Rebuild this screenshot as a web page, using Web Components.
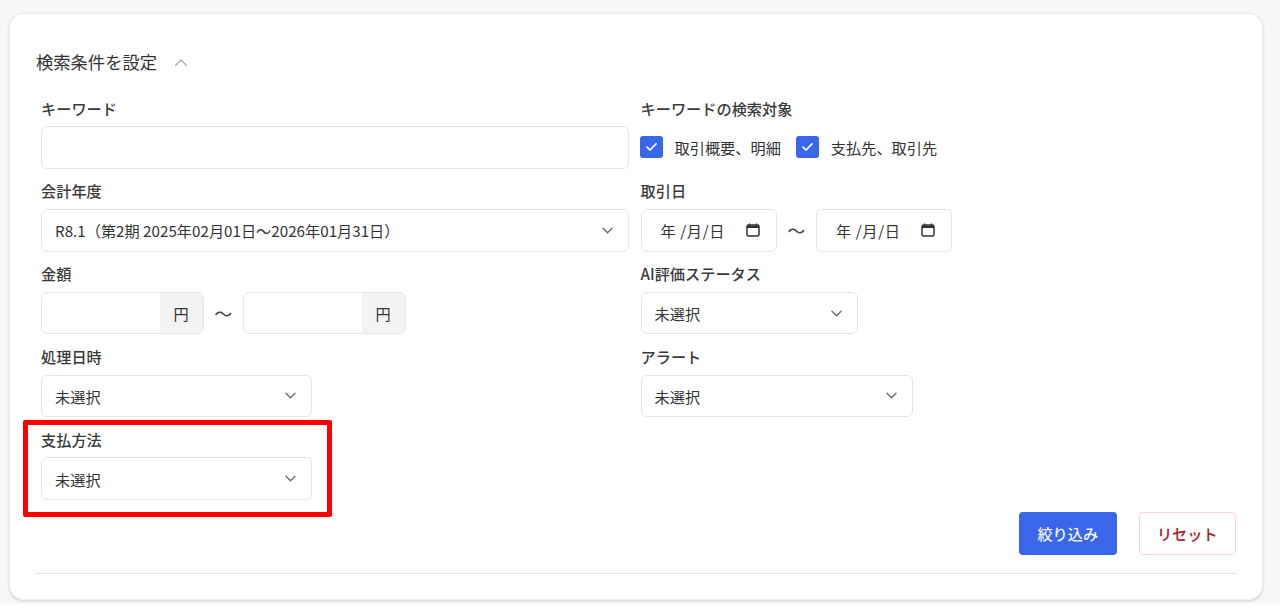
<!DOCTYPE html>
<html lang="ja">
<head>
<meta charset="utf-8">
<title>検索条件を設定</title>
<style>
html,body{margin:0;padding:0;background:#fff;}
body{font-family:"Noto Sans CJK JP","Noto Sans",sans-serif;color:#333;font-size:15.200px;}
</style>
</head>
<body>
<search-page>
  <search-field label="キーワード"><text-box></text-box></search-field>
  <search-field label="キーワードの検索対象">
    <check-row>
      <check-box>取引概要、明細</check-box>
      <check-box>支払先、取引先</check-box>
    </check-row>
  </search-field>
  <search-field label="会計年度"><select-box>R8.1（第2期 2025年02月01日～2026年01月31日）</select-box></search-field>
  <search-field label="取引日">
    <range-row><date-box></date-box><date-box></date-box></range-row>
  </search-field>
  <search-field label="金額">
    <range-row><money-box></money-box><money-box></money-box></range-row>
  </search-field>
  <search-field label="AI評価ステータス"><select-box style="width:217.500px">未選択</select-box></search-field>
  <search-field label="処理日時"><select-box style="width:271px">未選択</select-box></search-field>
  <search-field label="アラート"><select-box style="width:272px">未選択</select-box></search-field>
  <search-field label="支払方法" highlighted><select-box style="width:271px">未選択</select-box></search-field>
  <action-button slot="actions" kind="primary">絞り込み</action-button>
  <action-button slot="actions" kind="danger">リセット</action-button>
</search-page>
<script>
function define(name, css, html, setup){
  customElements.define(name, class extends HTMLElement{
    constructor(){
      super();
      const r=this.attachShadow({mode:'open'});
      r.innerHTML='<style>'+css+'</style>'+html;
    }
    connectedCallback(){ if(setup) setup(this); }
  });
}
const CHEVRON='<svg width="11" height="7" viewBox="0 0 11 7" fill="none" stroke="#666" stroke-width="1.3" stroke-linecap="round" stroke-linejoin="round"><path d="M1 1.200 5.500 5.700 10 1.200"/></svg>';

define('search-page',`
  :host{display:block;box-sizing:border-box;height:604px;background:#f8f8f8;padding:13px 17px 3px 9px;overflow:hidden;}
  .card{box-sizing:border-box;height:587px;background:#fff;border-radius:14px;border:1px solid #ececec;box-shadow:0 1px 3px rgba(0,0,0,.16);padding:36px 26px 0;}
  .head{display:flex;align-items:center;gap:17px;height:24px;font-size:17.300px;line-height:24px;color:#333;}
  .grid{display:grid;grid-template-columns:588px 1fr;column-gap:11.500px;padding-left:5px;margin-top:12px;}
  .actions{display:flex;justify-content:flex-end;gap:22px;margin-top:12px;}
  .rule{height:1px;background:#e4e4e4;margin-top:18px;}
`,`<div class="card">
  <div class="head"><span>検索条件を設定</span><svg width="14" height="9" viewBox="0 0 14 9" fill="none" stroke="#a8a8a8" stroke-width="1.2" stroke-linecap="round" stroke-linejoin="round"><path d="M1.500 7.500 7 2l5.500 5.500"/></svg></div>
  <div class="grid"><slot></slot></div>
  <div class="actions"><slot name="actions"></slot></div>
  <div class="rule"></div>
</div>`);

define('search-field',`
  :host{display:flex;flex-direction:column;justify-content:flex-end;height:82.800px;position:relative;}
  .label{font-size:15.200px;line-height:20px;font-weight:500;color:#3a3a3a;margin-bottom:8.500px;}
  .mark{display:none;position:absolute;left:-18.300px;top:3px;width:309.600px;height:96.700px;box-sizing:border-box;border:5.300px solid #f00;border-radius:2px;pointer-events:none;}
  :host([highlighted]) .mark{display:block;}
`,`<div class="label"></div><slot></slot><div class="mark"></div>`,
 el=>{el.shadowRoot.querySelector('.label').textContent=el.getAttribute('label');});

define('text-box',`
  :host{display:block;height:42.700px;}
  input{box-sizing:border-box;display:block;width:100%;height:100%;border:1px solid #e5e5e5;border-radius:6px;background:#fff;outline:none;padding:0 14px;font:inherit;}
`,`<input type="text" aria-label="キーワード">`);

define('select-box',`
  :host{display:flex;box-sizing:border-box;height:42.700px;align-items:center;justify-content:space-between;border:1px solid #e5e5e5;border-radius:6px;background:#fff;padding:0 15px 0 13px;font-size:15.200px;color:#333;white-space:nowrap;}
  svg{display:block;}
`,`<slot></slot>${CHEVRON}`);

define('check-row',`
  :host{display:flex;align-items:center;gap:15.500px;height:42.700px;margin-left:-.5px;}
`,`<slot></slot>`);

define('check-box',`
  :host{display:inline-flex;align-items:center;gap:12px;font-size:15.200px;color:#333;}
  .box{width:22.500px;height:22px;border-radius:3px;background:#3a66ea;display:flex;align-items:center;justify-content:center;}
`,`<span class="box"><svg width="13" height="10" viewBox="0 0 12 10" fill="none" stroke="#fff" stroke-width="1.700" stroke-linecap="round" stroke-linejoin="round"><path d="M1.500 5.200 4.500 8l6-6.200"/></svg></span><slot></slot>`);

define('range-row',`
  :host{display:flex;align-items:center;}
  .sep{font-size:18px;line-height:20px;color:#444;text-align:center;width:39.500px;flex:none;}
`,`<slot name="a"></slot><span class="sep">～</span><slot name="b"></slot>`,
 el=>{const k=el.children; if(k[0])k[0].slot='a'; if(k[1])k[1].slot='b';});

define('date-box',`
  :host{display:flex;box-sizing:border-box;width:136px;height:42.700px;align-items:center;justify-content:space-between;border:1px solid #e5e5e5;border-radius:6px;background:#fff;padding:0 16px 0 19px;font-size:15.200px;color:#333;white-space:nowrap;}
  span{letter-spacing:.6px;}
  svg{display:block;margin-top:-1px;}
`,`<span>年 /月/日</span><svg width="14" height="14" viewBox="0 0 14 14" fill="none"><path d="M3.500 0.500v2M10.500 0.500v2" stroke="#333" stroke-width="1.400"/><rect x="1" y="2" width="12" height="11" rx="1.500" stroke="#333" stroke-width="1.500"/><path d="M1 2.500h12v2.500H1z" fill="#333"/></svg>`);

define('money-box',`
  :host{display:flex;box-sizing:border-box;width:162.500px;height:42.700px;border:1px solid #e5e5e5;border-radius:6px;background:#fff;overflow:hidden;}
  input{flex:1;min-width:0;border:0;outline:none;background:none;padding:0 10px;font:inherit;}
  .unit{width:43px;background:#f3f3f3;display:flex;align-items:center;justify-content:center;font-size:15.200px;color:#333;box-sizing:border-box;}
`,`<input type="text" aria-label="金額"><span class="unit">円</span>`);

define('action-button',`
  :host{display:flex;box-sizing:border-box;width:97.500px;height:42.700px;align-items:center;justify-content:center;border-radius:4px;font-size:15.200px;font-weight:500;border:1px solid transparent;}
  :host([kind=primary]){background:#3a66ea;color:#f2f5ff;}
  :host([kind=danger]){background:#fff;border-color:#fbd5d7;color:#a3202a;}
`,`<slot></slot>`);
</script>
</body>
</html>
